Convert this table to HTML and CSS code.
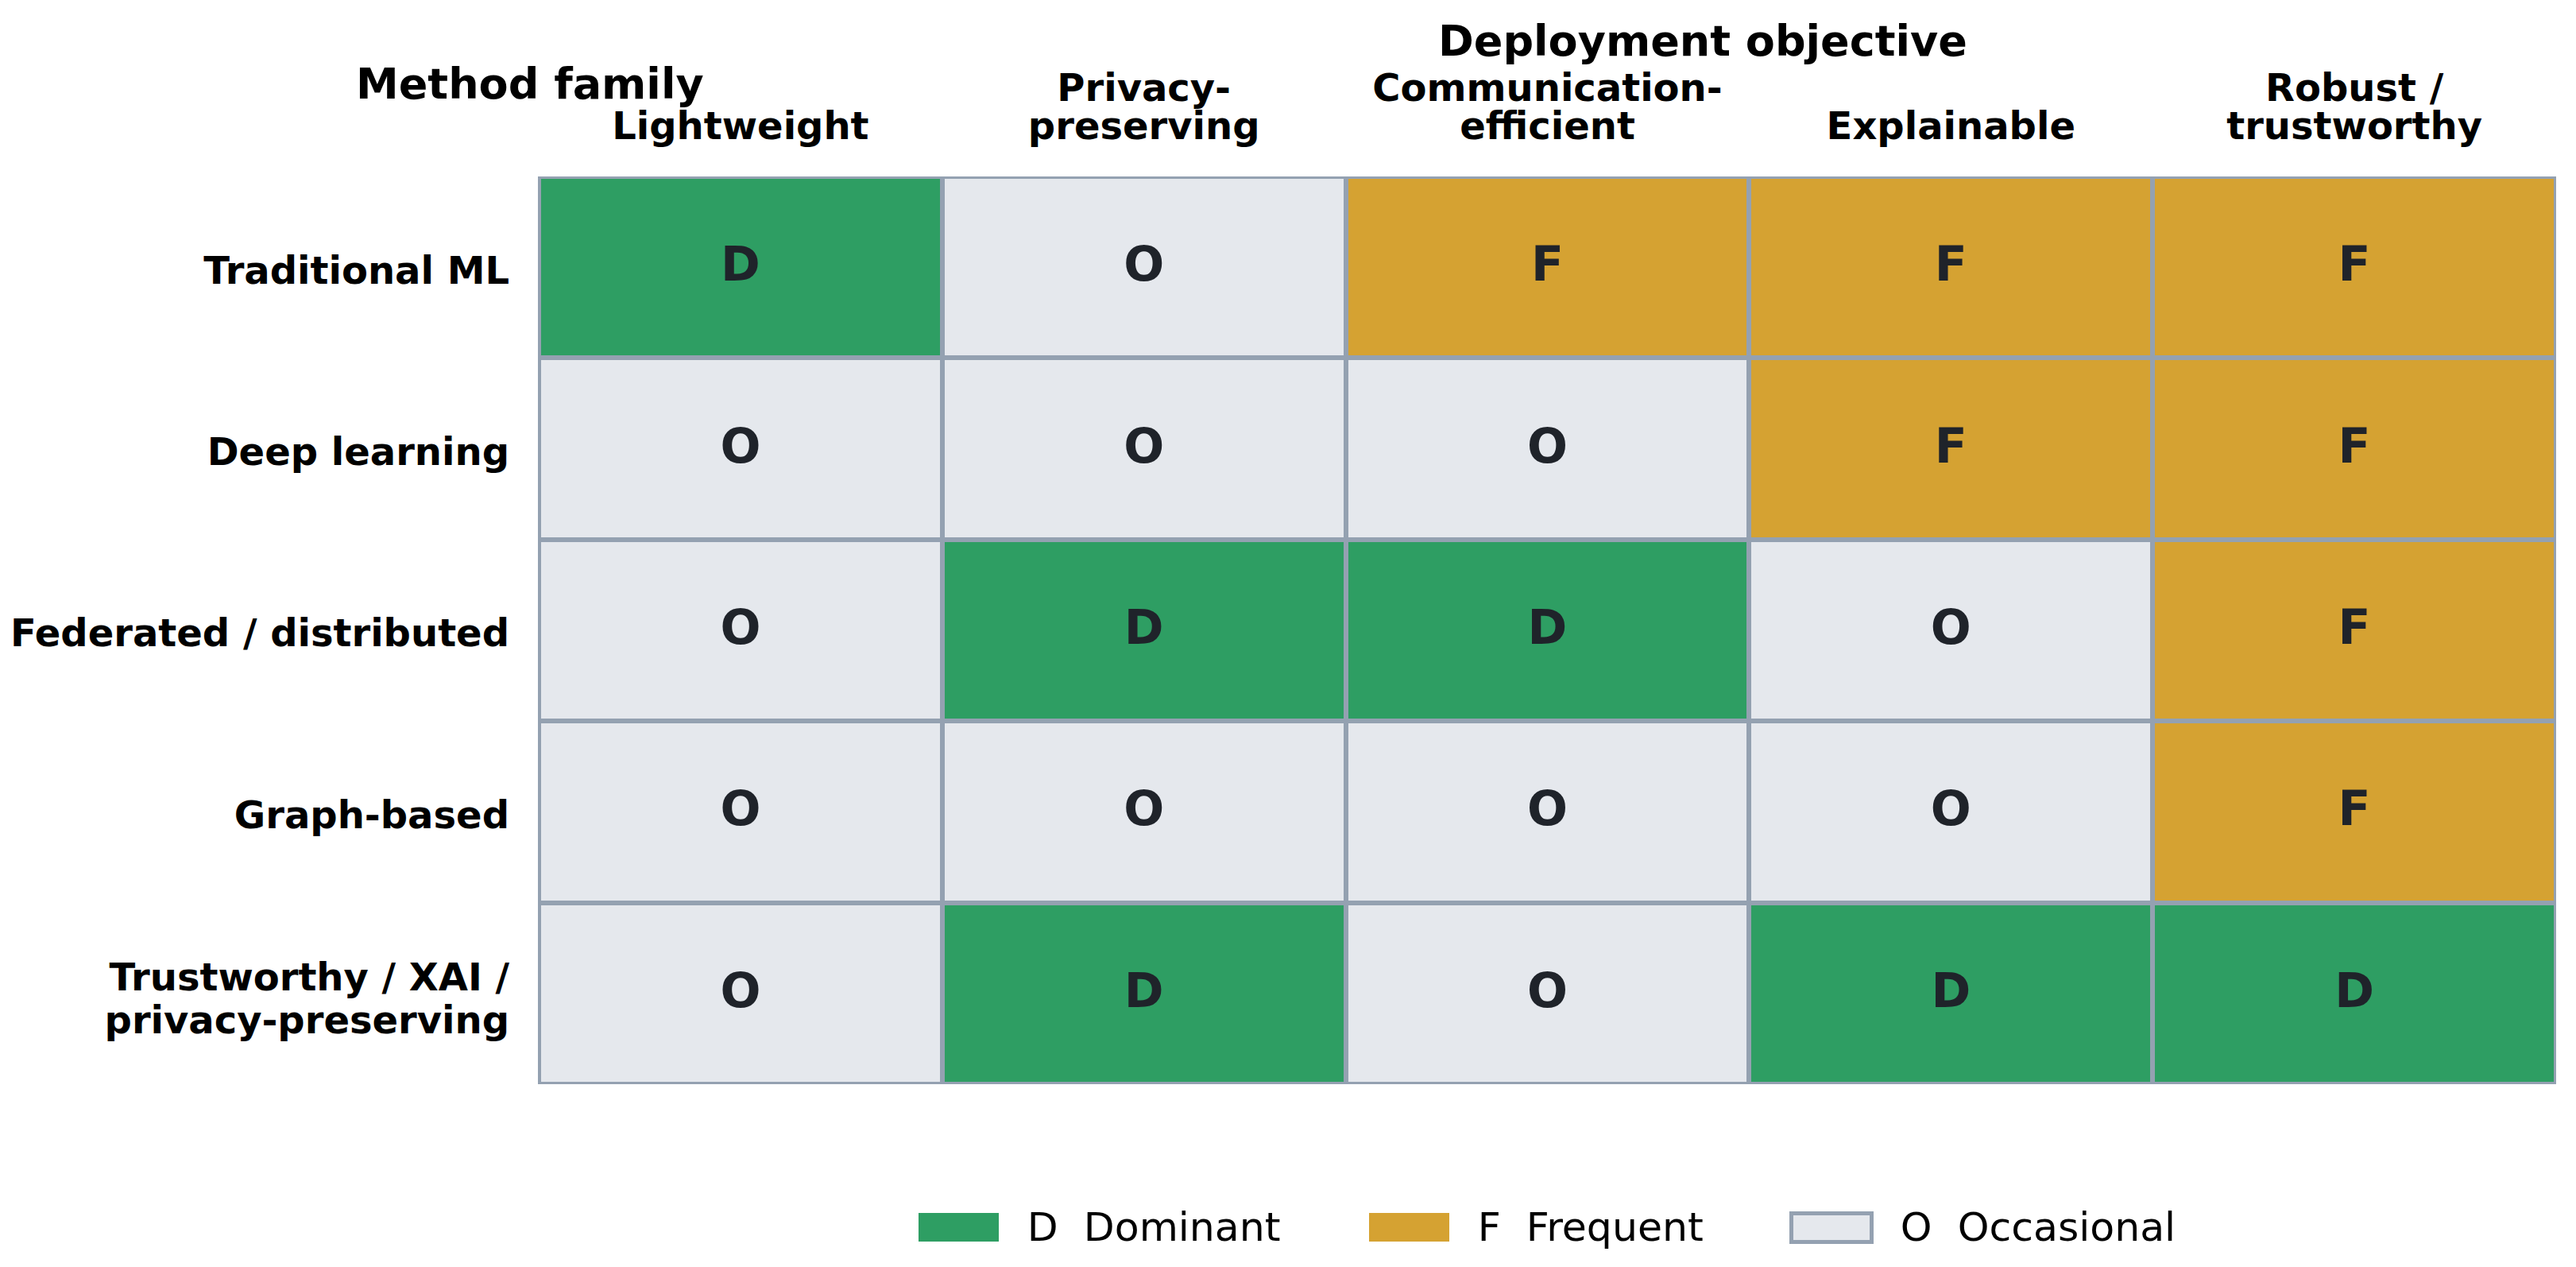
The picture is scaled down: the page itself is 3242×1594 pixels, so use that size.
FILE: index.html
```html
<!DOCTYPE html>
<html lang="en">
<head>
<meta charset="utf-8">
<title>Method family vs deployment objective</title>
<link rel="stylesheet" href="styles.css">
</head>
<body>
<div class="figure">
  <div class="title-row">
    <span class="axis-title title-x">Deployment objective</span>
  </div>

  <div class="header-row">
    <div class="corner"><span class="axis-title">Method family</span></div>
    <div class="col-heads">
      <div class="col-head">Lightweight</div>
      <div class="col-head">Privacy-<br>preserving</div>
      <div class="col-head">Communication-<br>efficient</div>
      <div class="col-head">Explainable</div>
      <div class="col-head">Robust /<br>trustworthy</div>
    </div>
  </div>

  <div class="body-row">
    <div class="row-labels">
      <div class="row-label">Traditional ML</div>
      <div class="row-label">Deep learning</div>
      <div class="row-label">Federated / distributed</div>
      <div class="row-label">Graph-based</div>
      <div class="row-label row-label-2l">Trustworthy / XAI /<br>privacy-preserving</div>
    </div>
    <div class="matrix">
      <div class="cell dom">D</div>
      <div class="cell occ">O</div>
      <div class="cell freq">F</div>
      <div class="cell freq">F</div>
      <div class="cell freq">F</div>

      <div class="cell occ">O</div>
      <div class="cell occ">O</div>
      <div class="cell occ">O</div>
      <div class="cell freq">F</div>
      <div class="cell freq">F</div>

      <div class="cell occ">O</div>
      <div class="cell dom">D</div>
      <div class="cell dom">D</div>
      <div class="cell occ">O</div>
      <div class="cell freq">F</div>

      <div class="cell occ">O</div>
      <div class="cell occ">O</div>
      <div class="cell occ">O</div>
      <div class="cell occ">O</div>
      <div class="cell freq">F</div>

      <div class="cell occ">O</div>
      <div class="cell dom">D</div>
      <div class="cell occ">O</div>
      <div class="cell dom">D</div>
      <div class="cell dom">D</div>
    </div>
  </div>

  <div class="legend-row">
    <div class="legend-spacer"></div>
    <div class="legend">
      <div class="legend-item">
        <span class="swatch swatch-dom"></span>
        <span class="legend-text">D&nbsp;&nbsp;Dominant</span>
      </div>
      <div class="legend-item">
        <span class="swatch swatch-freq"></span>
        <span class="legend-text">F&nbsp;&nbsp;Frequent</span>
      </div>
      <div class="legend-item">
        <span class="swatch swatch-occ"></span>
        <span class="legend-text">O&nbsp;&nbsp;Occasional</span>
      </div>
    </div>
  </div>
</div>
</body>
</html>
```

FILE: styles.css
```css
html, body {
  margin: 0;
  padding: 0;
  background: #ffffff;
}

body {
  width: 3242px;
  height: 1594px;
  overflow: hidden;
  font-family: "DejaVu Sans", "Liberation Sans", sans-serif;
  color: #000000;
}

.figure {
  display: grid;
  grid-template-columns: 677px 2540px;
}

/* ---------- titles ---------- */
.title-row {
  grid-column: 1 / 3;
  margin-top: 25px;
  height: 54px;
  padding-left: 1810px;
}

.axis-title {
  font-size: 54px;
  line-height: 54px;
  font-weight: bold;
  white-space: nowrap;
}

.header-row {
  grid-column: 1 / 3;
  display: grid;
  grid-template-columns: 677px 2540px;
  height: 103px;
}

.corner {
  padding-left: 448px;
  white-space: nowrap;
  overflow: visible;
  line-height: 54px;
}

.col-heads {
  align-self: end;
  display: grid;
  grid-template-columns: repeat(5, 1fr);
  column-gap: 6px;
  padding: 0 3px 0 4px;
  align-items: end;
}

.col-head {
  font-size: 48px;
  line-height: 48px;
  font-weight: bold;
  text-align: center;
  white-space: nowrap;
}

/* ---------- body ---------- */
.body-row {
  grid-column: 1 / 3;
  display: grid;
  grid-template-columns: 677px 2540px;
  margin-top: 40px;
  height: 1142px;
}

.row-labels {
  display: grid;
  grid-template-rows: repeat(5, 1fr);
  row-gap: 6px;
  padding: 3px 36px 3px 0;
}

.row-label {
  display: flex;
  align-items: center;
  justify-content: flex-end;
  text-align: right;
  font-size: 48px;
  line-height: 54px;
  font-weight: bold;
  white-space: nowrap;
  padding-top: 7px;
}

.row-label-2l {
  padding-top: 13px;
}

.matrix {
  box-sizing: border-box;
  display: grid;
  grid-template-columns: repeat(5, 1fr);
  grid-template-rows: repeat(5, 1fr);
  gap: 6px;
  padding: 3px 3px 3px 4px;
  background: #94a1b1;
  height: 1142px;
}

.cell {
  display: flex;
  align-items: center;
  justify-content: center;
  padding-bottom: 8px;
  font-size: 60px;
  line-height: 60px;
  font-weight: bold;
  color: #1f232a;
}

.dom  { background: #2e9e63; }
.freq { background: #d5a232; }
.occ  { background: #e5e8ed; }

/* ---------- legend ---------- */
.legend-row {
  grid-column: 1 / 3;
  display: grid;
  grid-template-columns: 677px 2540px;
  margin-top: 156px;
}

.legend {
  display: flex;
  justify-content: center;
  align-items: center;
  column-gap: 111px;
}

.legend-item {
  display: flex;
  align-items: center;
  column-gap: 36px;
}

.swatch {
  display: block;
  width: 101px;
  height: 36px;
  box-sizing: border-box;
}

.swatch-dom  { background: #2e9e63; }
.swatch-freq { background: #d5a232; }
.swatch-occ  {
  width: 106px;
  height: 41px;
  margin: 0 -2.5px;
  background: #e5e8ed;
  border: 5px solid #94a1b1;
}

.legend-text {
  font-size: 50.5px;
  line-height: 48px;
  font-weight: normal;
  white-space: pre;
}
```
